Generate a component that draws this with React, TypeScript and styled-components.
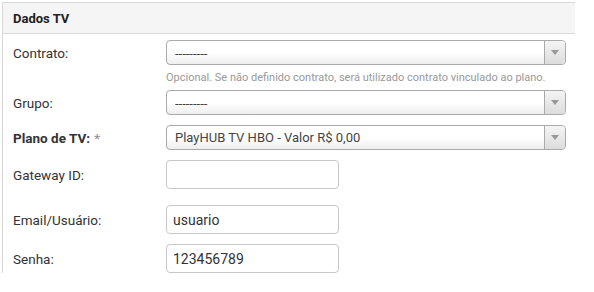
import React from "react";
import styled, { createGlobalStyle } from "styled-components";

const Global = createGlobalStyle`
  body {
    margin: 0;
    background: #ffffff;
    font-family: Roboto, "Liberation Sans", Arial, sans-serif;
    color: #333333;
  }
`;

const Page = styled.div`
  padding: 2px 0 0 2px;
`;

const Panel = styled.section`
  width: 573px;
  border-top: 1px solid #d8d8d8;
  border-left: 1px solid #d8d8d8;
  box-sizing: border-box;
`;

const Header = styled.div`
  height: 30px;
  background: #f5f5f5;
  border-bottom: 1px solid #dadada;
  display: flex;
  align-items: center;
  padding-left: 10px;
  font-size: 13px;
  font-weight: 700;
  color: #222222;
`;

const Body = styled.div`
  padding: 6px 0 0 10px;
`;

const Row = styled.div<{ $mb: number }>`
  display: grid;
  grid-template-columns: 153px 1fr;
  margin-bottom: ${(p) => p.$mb}px;
`;

const Label = styled.label<{ $h: number; $bold?: boolean }>`
  height: ${(p) => p.$h}px;
  display: flex;
  align-items: center;
  font-size: 13.5px;
  font-weight: ${(p) => (p.$bold ? 700 : 400)};
  color: #333333;
`;

const Req = styled.span`
  color: #999999;
  margin-left: 4px;
`;

const Field = styled.div`
  display: flex;
  flex-direction: column;
`;

const SelectBox = styled.div`
  width: 400px;
  height: 25px;
  box-sizing: border-box;
  border: 1px solid #aaaaaa;
  border-radius: 4px;
  background: linear-gradient(#ffffff 0%, #ffffff 50%, #eeeeee 100%);
  display: flex;
  align-items: stretch;
  overflow: hidden;
`;

const SelectText = styled.span<{ $dash?: boolean }>`
  flex: 1;
  padding-left: 8px;
  display: flex;
  align-items: center;
  font-size: 13px;
  color: #444444;
  padding-top: ${(p) => (p.$dash ? 2 : 0)}px;
`;

const Arrow = styled.span`
  width: 20px;
  border-left: 1px solid #aaaaaa;
  background: linear-gradient(#f4f4f4, #dcdcdc);
  display: flex;
  align-items: center;
  justify-content: center;
`;

const Tri = styled.span`
  width: 0;
  height: 0;
  border-left: 4px solid transparent;
  border-right: 4px solid transparent;
  border-top: 5px solid #999999;
`;

const Help = styled.div`
  margin-top: 6px;
  font-size: 11px;
  line-height: 14px;
  color: #999999;
`;

const Input = styled.input`
  width: 173px;
  height: 29px;
  box-sizing: border-box;
  border: 1px solid #c8c8c8;
  border-radius: 4px;
  padding: 0 6px;
  font-family: Roboto, "Liberation Sans", Arial, sans-serif;
  font-size: 14px;
  color: #333333;
  outline: none;
`;

const Select = ({ value, dash }: { value: string; dash?: boolean }) => (
  <SelectBox>
    <SelectText $dash={dash}>{value}</SelectText>
    <Arrow>
      <Tri />
    </Arrow>
  </SelectBox>
);

export default function App() {
  return (
    <>
      <Global />
      <Page>
        <Panel>
          <Header>Dados TV</Header>
          <Body>
            <Row $mb={5}>
              <Label $h={25}>Contrato:</Label>
              <Field>
                <Select value="---------" dash />
                <Help>Opcional. Se não definido contrato, será utilizado contrato vinculado ao plano.</Help>
              </Field>
            </Row>
            <Row $mb={10}>
              <Label $h={25}>Grupo:</Label>
              <Field>
                <Select value="---------" dash />
              </Field>
            </Row>
            <Row $mb={10}>
              <Label $h={25} $bold>
                Plano de TV:<Req>*</Req>
              </Label>
              <Field>
                <Select value="PlayHUB TV HBO - Valor R$ 0,00" />
              </Field>
            </Row>
            <Row $mb={16}>
              <Label $h={29}>Gateway ID:</Label>
              <Field>
                <Input defaultValue="" />
              </Field>
            </Row>
            <Row $mb={10}>
              <Label $h={29}>Email/Usuário:</Label>
              <Field>
                <Input defaultValue="usuario" />
              </Field>
            </Row>
            <Row $mb={20}>
              <Label $h={29}>Senha:</Label>
              <Field>
                <Input defaultValue="123456789" />
              </Field>
            </Row>
          </Body>
        </Panel>
      </Page>
    </>
  );
}
